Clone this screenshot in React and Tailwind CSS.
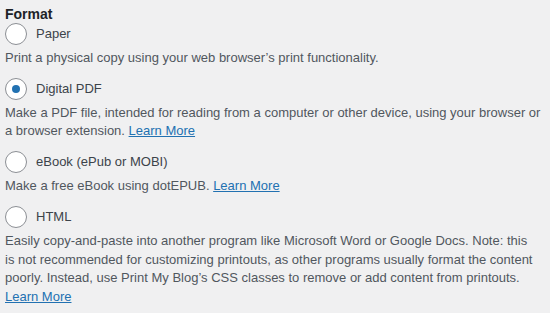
import React from 'react';

const OPTIONS = [
  {
    label: 'Paper',
    desc: "Print a physical copy using your web browser\u2019s print functionality.",
    link: false,
  },
  {
    label: 'Digital PDF',
    checked: true,
    desc: 'Make a PDF file, intended for reading from a computer or other device, using your browser or a browser extension.',
    link: true,
  },
  {
    label: 'eBook (ePub or MOBI)',
    desc: 'Make a free eBook using dotEPUB.',
    link: true,
  },
  {
    label: 'HTML',
    desc: "Easily copy-and-paste into another program like Microsoft Word or Google Docs. Note: this is not recommended for customizing printouts, as other programs usually format the content poorly. Instead, use Print My Blog\u2019s CSS classes to remove or add content from printouts.",
    link: true,
    linkBreak: true,
  },
];

const Radio = ({ checked }) => (
  <span className="flex items-center justify-center w-[22px] h-[22px] rounded-full border border-[#8c8f94] bg-white shrink-0">
    {checked && <span className="w-[8px] h-[8px] rounded-full bg-[#2271b1]" />}
  </span>
);

const App = () => {
  return (
    <div
      className="w-[550px] h-[313px] overflow-hidden bg-[#f0f0f1] pl-[5px] pt-[5px] text-[13px] text-[#50575e]"
      style={{ fontFamily: '"Liberation Sans", Arial, sans-serif' }}
    >
      <div className="text-[14px] leading-[18px] font-semibold text-[#1d2327]">Format</div>
      {OPTIONS.map((opt) => (
        <div key={opt.label}>
          <label className="flex items-center gap-[9px] h-[22px]">
            <Radio checked={opt.checked} />
            <span className="text-[#3c434a]">{opt.label}</span>
          </label>
          <p className={`mt-[4px] mb-[10px] leading-[18.7px] ${opt.linkBreak ? 'w-[534px]' : 'pr-[4px]'}`}>
            {opt.desc}{' '}
            {opt.linkBreak && <br />}
            {opt.link && (
              <a href="#" className="text-[#2271b1] underline">Learn More</a>
            )}
          </p>
        </div>
      ))}
    </div>
  );
};

export default App;
